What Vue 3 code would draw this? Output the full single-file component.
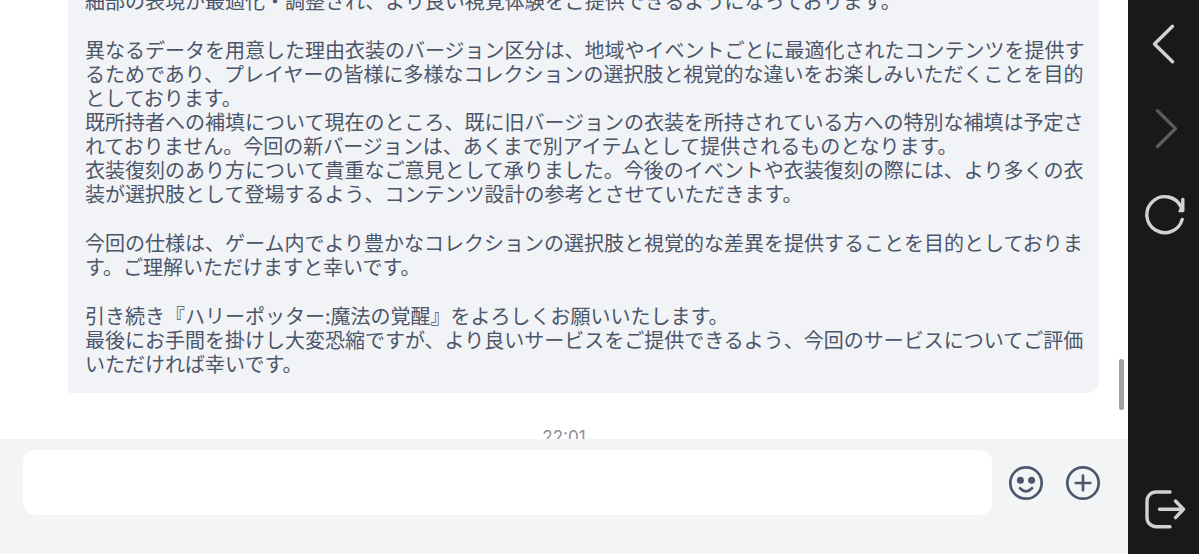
<script setup>
import { ref } from 'vue'

const draft = ref('')

const paragraphs = [
  ['細部の表現が最適化・調整され、より良い視覚体験をご提供できるようになっております。'],
  [
    '異なるデータを用意した理由衣装のバージョン区分は、地域やイベントごとに最適化されたコンテンツを提供するためであり、プレイヤーの皆様に多様なコレクションの選択肢と視覚的な違いをお楽しみいただくことを目的としております。',
    '既所持者への補填について現在のところ、既に旧バージョンの衣装を所持されている方への特別な補填は予定されておりません。今回の新バージョンは、あくまで別アイテムとして提供されるものとなります。',
    '衣装復刻のあり方について貴重なご意見として承りました。今後のイベントや衣装復刻の際には、より多くの衣装が選択肢として登場するよう、コンテンツ設計の参考とさせていただきます。'
  ],
  [
    '今回の仕様は、ゲーム内でより豊かなコレクションの選択肢と視覚的な差異を提供することを目的としております。ご理解いただけますと幸いです。'
  ],
  [
    '引き続き『ハリーポッター:魔法の覚醒』をよろしくお願いいたします。',
    '最後にお手間を掛けし大変恐縮ですが、より良いサービスをご提供できるよう、今回のサービスについてご評価いただければ幸いです。'
  ]
]
</script>

<template>
  <div class="app" lang="ja">
    <main class="chat">
      <section class="messages">
        <article class="bubble">
          <div v-for="(group, i) in paragraphs" :key="i" class="group">
            <p v-for="(text, j) in group" :key="j">{{ text }}</p>
          </div>
        </article>
        <time class="stamp">22:01</time>
        <span class="thumb"></span>
      </section>
      <form class="composer" @submit.prevent>
        <div class="bar">
          <input v-model="draft" class="field" type="text" aria-label="メッセージ" />
          <div class="actions">
            <button type="button" class="action" aria-label="絵文字">
              <svg viewBox="0 0 36 36">
                <circle cx="18" cy="18" r="15.7" />
                <circle class="eye" cx="12.4" cy="15.2" r="3.5" />
                <circle class="eye" cx="23.6" cy="15.2" r="3.5" />
                <path d="M12 23.3Q18 29.3 24 23.3" />
              </svg>
            </button>
            <button type="button" class="action" aria-label="追加">
              <svg viewBox="0 0 36 36">
                <circle cx="18" cy="18" r="15.7" />
                <path d="M18 10.7V25.3M10.7 18H25.3" />
              </svg>
            </button>
          </div>
        </div>
      </form>
    </main>
    <nav class="side">
      <button type="button" class="tool" aria-label="戻る">
        <svg viewBox="0 0 44 44"><path d="M30.5 4.3L12.5 22L30.5 39.7" /></svg>
      </button>
      <button type="button" class="tool off" aria-label="進む" disabled>
        <svg viewBox="0 0 44 44"><path d="M15.5 3.8L33.5 21.6L15.5 39.5" /></svg>
      </button>
      <button type="button" class="tool" aria-label="再読み込み">
        <svg viewBox="0 0 44 44">
          <path d="M40.2 27.4A18 18 0 1 1 39 14.8" />
          <path d="M40.8 7.5V18.5" />
          <path class="tip" d="M41 20.2H36.2L39 12Z" />
        </svg>
      </button>
      <button type="button" class="tool exit" aria-label="終了">
        <svg viewBox="0 0 44 44">
          <path d="M28 5H14A9 9 0 0 0 5 14V30.7A9 9 0 0 0 14 39.7H28" />
          <path d="M17.5 22.3H41.5M33.5 14L41.5 22.3L33.5 30.6" />
        </svg>
      </button>
    </nav>
  </div>
</template>

<style>
body {
  margin: 0;
}
</style>

<style scoped>
.app {
  display: flex;
  height: 100vh;
  overflow: hidden;
  background: #fff;
  color: #4b566a;
  font-family: "Noto Sans CJK JP", sans-serif;
}

.chat {
  flex: 1;
  min-width: 0;
  display: flex;
  flex-direction: column;
}

.messages {
  position: relative;
  flex: 1;
  min-height: 0;
  overflow: hidden;
  display: flex;
  flex-direction: column;
  justify-content: flex-end;
}

.bubble {
  flex-shrink: 0;
  display: flex;
  flex-direction: column;
  gap: 25px;
  margin: 0 29px 34px 68px;
  padding: 16px 14px 17px 17px;
  border-radius: 0 12px 12px 0;
  background: #f2f3f6;
  font-size: 20px;
  line-height: 24px;
}

p {
  margin: 0;
}

.stamp {
  flex-shrink: 0;
  align-self: center;
  margin-bottom: -8px;
  color: #8d9094;
  font-family: Inter, sans-serif;
  font-size: 17px;
  line-height: 20px;
}

.thumb {
  position: absolute;
  right: 4px;
  bottom: 29px;
  width: 5px;
  height: 51px;
  border-radius: 3px;
  background: #a0a0a0;
}

.composer {
  flex-shrink: 0;
  padding-bottom: 30px;
  background: #f4f5f7;
}

.bar {
  display: flex;
  align-items: center;
  gap: 16px;
  padding: 11px 27px 9px 23px;
  background: #f2f4f6;
}

.field {
  flex: 1;
  min-width: 0;
  height: 65px;
  box-sizing: border-box;
  padding: 0 16px;
  border: 0;
  border-radius: 12px;
  outline: none;
  background: #fff;
  color: inherit;
  font: inherit;
  font-size: 20px;
}

.actions {
  display: flex;
  gap: 21px;
}

button {
  display: block;
  padding: 0;
  border: 0;
  background: none;
}

svg {
  display: block;
  width: 100%;
  height: 100%;
  fill: none;
  stroke: currentColor;
  stroke-linecap: round;
  stroke-linejoin: round;
}

.action {
  width: 36px;
  height: 36px;
  color: #4b586b;
  stroke-width: 2.7;
}

.eye {
  fill: currentColor;
  stroke: none;
}

.side {
  flex-shrink: 0;
  display: flex;
  flex-direction: column;
  gap: 41px;
  padding: 22px 13px 23px 14px;
  background: #1a1917;
}

.tool {
  width: 44px;
  height: 44px;
  color: #d3d2d0;
  stroke-width: 3.4;
}

.off {
  color: #5c5b59;
}

.tip {
  fill: currentColor;
  stroke: none;
}

.exit {
  margin-top: auto;
}
</style>
